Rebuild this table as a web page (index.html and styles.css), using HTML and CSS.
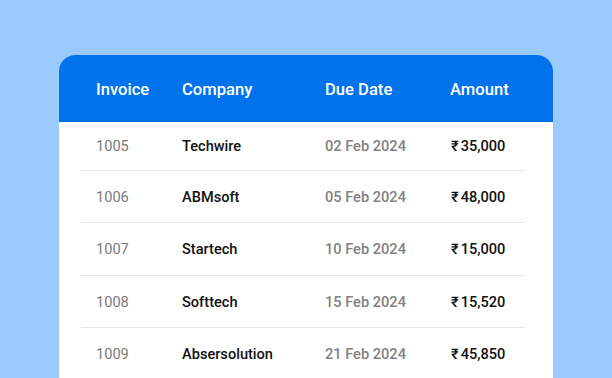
FILE: index.html
```html
<!DOCTYPE html>
<html>
<head>
<meta charset="utf-8">
<link rel="stylesheet" href="styles.css">
</head>
<body>
<div class="card">
  <div class="head grid">
    <div>Invoice</div><div>Company</div><div>Due Date</div><div>Amount</div>
  </div>
  <div class="rows">
    <div class="row grid"><div class="inv">1005</div><div class="co">Techwire</div><div class="date">02 Feb 2024</div><div class="amt"><span class="rs">₹</span>35,000</div></div>
    <div class="row grid"><div class="inv">1006</div><div class="co">ABMsoft</div><div class="date">05 Feb 2024</div><div class="amt"><span class="rs">₹</span>48,000</div></div>
    <div class="row grid"><div class="inv">1007</div><div class="co">Startech</div><div class="date">10 Feb 2024</div><div class="amt"><span class="rs">₹</span>15,000</div></div>
    <div class="row grid"><div class="inv">1008</div><div class="co">Softtech</div><div class="date">15 Feb 2024</div><div class="amt"><span class="rs">₹</span>15,520</div></div>
    <div class="row grid"><div class="inv">1009</div><div class="co">Absersolution</div><div class="date">21 Feb 2024</div><div class="amt"><span class="rs">₹</span>45,850</div></div>
  </div>
</div>
</body>
</html>
```

FILE: styles.css
```css
html, body {
  margin: 0;
  padding: 0;
}
body {
  width: 612px;
  height: 378px;
  overflow: hidden;
  background: #99cbfe;
  font-family: Roboto, "Liberation Sans", sans-serif;
  padding-top: 55px;
  box-sizing: border-box;
}
.card {
  margin-left: 59px;
  width: 494px;
  height: 340px;
  background: #ffffff;
  border-radius: 16px 16px 0 0;
  overflow: hidden;
}
.grid {
  display: grid;
  grid-template-columns: 86px 143px 125px 1fr;
  align-items: center;
}
.head {
  background: #0073ec;
  color: #ffffff;
  height: 67px;
  padding: 2px 0 0 37px;
  box-sizing: border-box;
  font-size: 16.6px;
  font-weight: 500;
}
.rows {
  padding: 0 28px 0 22px;
}
.row {
  height: 52px;
  padding-left: 15px;
  border-bottom: 1px solid #e6e6e6;
  box-sizing: border-box;
  font-size: 14.6px;
}
.row:nth-child(1) {
  height: 49px;
}
.row:nth-child(3) {
  height: 53px;
}
.row:last-child {
  border-bottom: none;
}
.inv {
  color: #7a7a7a;
}
.co {
  color: #111111;
  font-weight: 500;
}
.date {
  color: #828282;
  font-weight: 500;
}
.amt {
  color: #111111;
  font-weight: 500;
  padding-left: 1px;
}
.rs {
  margin-right: 2px;
}
```
